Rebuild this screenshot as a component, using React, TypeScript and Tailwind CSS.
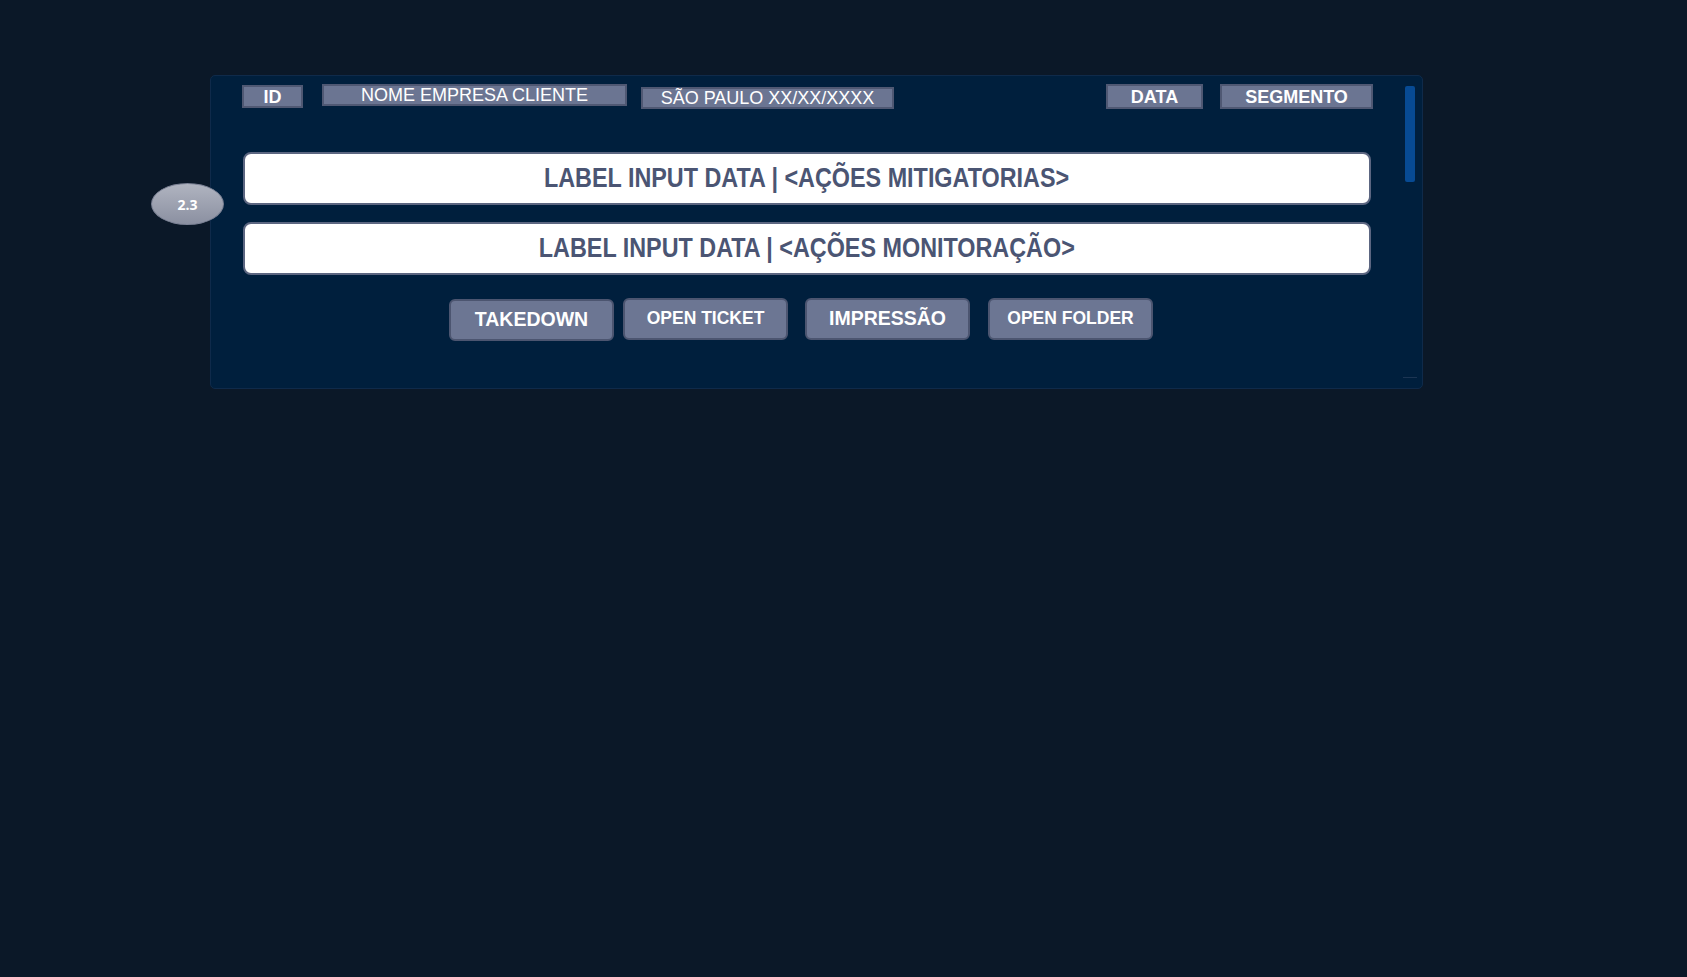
import React from "react";

type Chip = { label: string; w: string; h: string; mt: string; ml: string; bold?: boolean };

const leftChips: Chip[] = [
  { label: "ID", w: "w-[61px]", h: "h-[23px]", mt: "mt-[1px]", ml: "ml-0", bold: true },
  { label: "NOME EMPRESA CLIENTE", w: "w-[305px]", h: "h-[22px]", mt: "mt-0", ml: "ml-[19px]" },
  { label: "SÃO PAULO XX/XX/XXXX", w: "w-[253px]", h: "h-[22px]", mt: "mt-[3px]", ml: "ml-[14px]" },
];

const rightChips: Chip[] = [
  { label: "DATA", w: "w-[97px]", h: "h-[25px]", mt: "mt-0", ml: "ml-0", bold: true },
  { label: "SEGMENTO", w: "w-[153px]", h: "h-[25px]", mt: "mt-0", ml: "ml-[17px]", bold: true },
];

function HeaderChip({ chip }: { chip: Chip }) {
  return (
    <div
      className={`${chip.w} ${chip.h} ${chip.mt} ${chip.ml} flex items-center justify-center border-2 border-[#4f5873] bg-[#6b7592] text-[18px] leading-none text-white ${
        chip.bold ? "font-bold" : "font-normal"
      }`}
    >
      {chip.label}
    </div>
  );
}

function InputLabel({ text }: { text: string }) {
  return (
    <div className="h-[53px] w-[1128px] flex items-center justify-center rounded-[8px] border-2 border-[#5c6681] bg-white">
      <span className="inline-block scale-x-[0.865] whitespace-nowrap text-[27px] font-bold leading-none text-[#4b5573]">
        {text}
      </span>
    </div>
  );
}

const actions = [
  { label: "TAKEDOWN", size: "text-[19.5px]", ml: "ml-0", mt: "mt-[1px]" },
  { label: "OPEN TICKET", size: "text-[17.5px]", ml: "ml-[9px]", mt: "mt-0" },
  { label: "IMPRESSÃO", size: "text-[19.5px]", ml: "ml-[17px]", mt: "mt-0" },
  { label: "OPEN FOLDER", size: "text-[17.5px]", ml: "ml-[18px]", mt: "mt-0" },
];

export default function App() {
  return (
    <div className="min-h-[977px] w-full bg-[#0b1828] pt-[75px] pl-[210px] font-['Liberation_Sans',Arial,sans-serif]">
      <div className="relative flex h-[314px] w-[1213px] rounded-[5px] border border-[#0f2a4a] bg-[#001f3d]">
        {/* step badge */}
        <div className="absolute left-[-60px] top-[107px] flex h-[42px] w-[73px] items-center justify-center rounded-[50%] border border-[#7d8396] bg-gradient-to-b from-[#b0b4c0] to-[#8b90a1] font-['Open_Sans',sans-serif] text-[14px] font-bold text-white">
          2.3
        </div>

        <div className="flex w-[1131px] flex-col pl-0 ml-[31px] pt-[8px]">
          <div className="flex items-start">
            {leftChips.map((c) => (
              <HeaderChip key={c.label} chip={c} />
            ))}
            <div className="flex-1" />
            {rightChips.map((c) => (
              <HeaderChip key={c.label} chip={c} />
            ))}
          </div>

          <div className="mt-[43px] flex flex-col gap-[17px] pl-[1px]">
            <InputLabel text="LABEL INPUT DATA | <AÇÕES MITIGATORIAS>" />
            <InputLabel text="LABEL INPUT DATA | <AÇÕES MONITORAÇÃO>" />
          </div>

          <div className="mt-[23px] flex items-start pl-[207px]">
            {actions.map((a) => (
              <button
                key={a.label}
                className={`${a.ml} ${a.mt} flex h-[42px] w-[165px] items-center justify-center rounded-[6px] border-2 border-[#4c5570] bg-[#6c7693] font-bold leading-none text-white ${a.size}`}
              >
                {a.label}
              </button>
            ))}
          </div>
        </div>

        {/* scrollbar */}
        <div className="ml-[32px] mt-[10px] h-[96px] w-[10px] rounded-[2px] bg-[#074a93]" />
        <div className="absolute bottom-[10px] right-[5px] h-[1px] w-[14px] bg-[#1c3553]" />
      </div>
    </div>
  );
}
